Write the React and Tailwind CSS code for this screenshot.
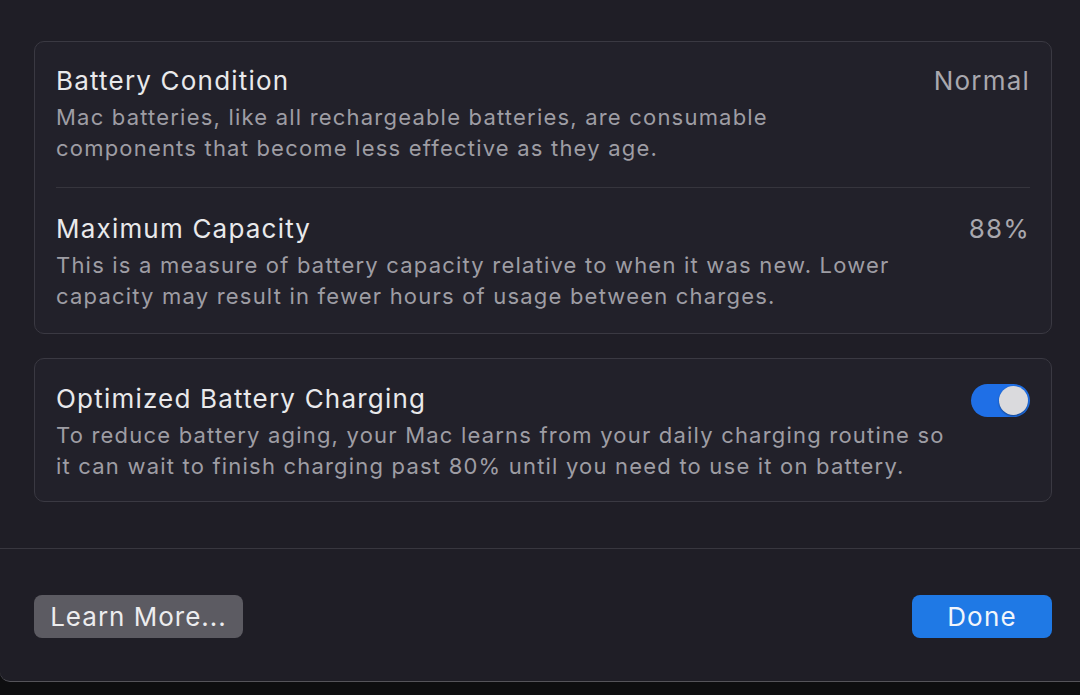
export default function App() {
  const font = { fontFamily: 'Inter, "Noto Sans", sans-serif' }
  return (
    <div className="w-[1080px] h-[695px] bg-[#0e0e10] overflow-hidden" style={font}>
      <div className="h-[682px] bg-[#1f1e26] rounded-bl-[10px] border-b border-[#55545a] flex flex-col">
        <div className="pl-[34px] pr-[28px] pt-[41px] flex flex-col gap-[24px]">
          <div className="rounded-[10px] border border-[#3a3942] bg-[#22212a]">
            <div className="mx-[21px] pt-[23px] pb-[23px] border-b border-[#36353d]">
              <div className="flex justify-between items-start">
                <div className="text-[26px] leading-[32px] text-[#e9e9eb] tracking-[1.2px]">Battery Condition</div>
                <div className="text-[26px] leading-[32px] text-[#a9a8ae] tracking-[1.2px]">Normal</div>
              </div>
              <p className="mt-[5px] text-[22px] leading-[31px] text-[#9e9da4] tracking-[1.2px]">
                Mac batteries, like all rechargeable batteries, are consumable<br />
                components that become less effective as they age.
              </p>
            </div>
            <div className="mx-[21px] pt-[25px] pb-[21px]">
              <div className="flex justify-between items-start">
                <div className="text-[26px] leading-[32px] text-[#e9e9eb] tracking-[1.2px]">Maximum Capacity</div>
                <div className="text-[26px] leading-[32px] text-[#a9a8ae] tracking-[1.2px]">88%</div>
              </div>
              <p className="mt-[5px] text-[22px] leading-[31px] text-[#9e9da4] tracking-[1.2px]">
                This is a measure of battery capacity relative to when it was new. Lower<br />
                capacity may result in fewer hours of usage between charges.
              </p>
            </div>
          </div>

          <div className="rounded-[10px] border border-[#3a3942] bg-[#22212a]">
            <div className="mx-[21px] pt-[24px] pb-[19px] flex justify-between items-start">
              <div>
                <div className="text-[26px] leading-[32px] text-[#e9e9eb] tracking-[1.2px]">Optimized Battery Charging</div>
                <p className="mt-[5px] text-[22px] leading-[31px] text-[#9e9da4] tracking-[1.2px]">
                  To reduce battery aging, your Mac learns from your daily charging routine so<br />
                  it can wait to finish charging past 80% until you need to use it on battery.
                </p>
              </div>
              <div className="mt-[1px] w-[59px] h-[33px] rounded-full bg-[#1f6fe6] flex items-center justify-end pr-[2px]">
                <div className="w-[29px] h-[29px] rounded-full bg-[#dadadd] shadow-[0_1px_2px_rgba(0,0,0,0.4)]" />
              </div>
            </div>
          </div>
        </div>

        <div className="mt-[46px] border-t border-[#38373f]" />

        <div className="pl-[34px] pr-[28px] pt-[46px] flex justify-between">
          <button className="w-[209px] h-[43px] rounded-[8px] bg-[#5c5b62] text-[26px] text-[#ececee] tracking-[1px]">Learn More...</button>
          <button className="w-[140px] h-[43px] rounded-[8px] bg-[#1f79e5] text-[26px] text-[#f1f5fb] tracking-[1.2px]">Done</button>
        </div>
      </div>
    </div>
  )
}
